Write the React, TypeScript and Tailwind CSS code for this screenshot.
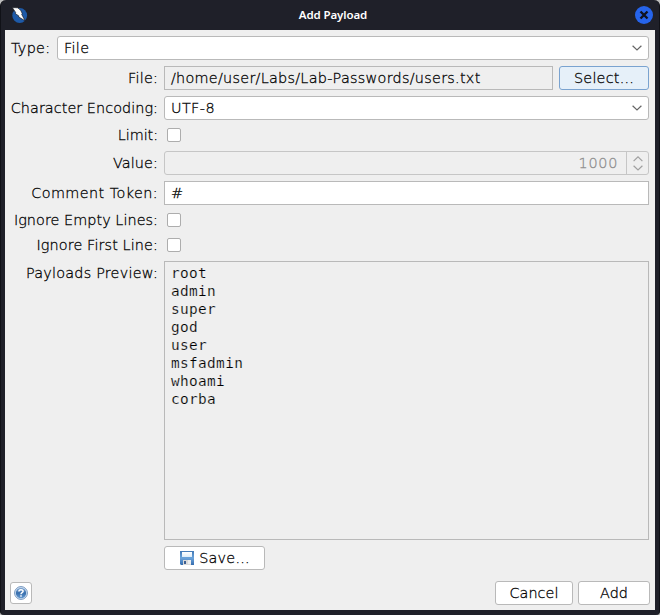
import React from "react";

const box = "border border-[#b9b9b9]";
const button = "flex items-center justify-center rounded-[3px] border border-[#b9b9b9] bg-white h-6 leading-[22px]";

function Chevron({ up = false, color = "#666" }: { up?: boolean; color?: string }) {
  return (
    <svg width="10" height="6" viewBox="0 0 10 6" fill="none" stroke={color} strokeWidth="1.2">
      <path d={up ? "M.6 5.1 5 .9 9.4 5.1" : "M.6.7 5 4.9 9.4.7"} />
    </svg>
  );
}

function Combo({ text, className = "" }: { text: string; className?: string }) {
  return (
    <div className={`flex h-6 items-center justify-between rounded-[3px] bg-white pl-[6px] pr-[6px] leading-[22px] ${box} ${className}`}>
      <span>{text}</span>
      <Chevron />
    </div>
  );
}

function Row({ label, tracking = "", className, children }: { label: string; tracking?: string; className: string; children: React.ReactNode }) {
  return (
    <div className={`flex ${className}`}>
      <div className="mr-[6px] flex h-6 w-[148px] shrink-0 justify-end whitespace-nowrap leading-[24px]">
        <span className={tracking}>{label}</span>
      </div>
      {children}
    </div>
  );
}

function Check() {
  return <div className="ml-[3px] mt-[5px] h-[14px] w-[14px] rounded-[2px] border border-[#adadad] bg-white" />;
}

function ZapLogo() {
  return (
    <svg width="17" height="17" viewBox="0 0 17 17">
      <circle cx="8.7" cy="8.5" r="7.4" fill="#1e5aa8" />
      <path d="M1.3 .5 6.6 .8C9.5 2.5 10.6 4.5 11.2 6.7L10.7 7.3 14.1 13.8 7.6 9.9 7.8 8.9 4.4 6.7 4.6 5.4Z" fill="#fff" stroke="#15191f" strokeWidth=".7" />
    </svg>
  );
}

function SaveIcon() {
  return (
    <svg width="14" height="14" viewBox="0 0 14 14">
      <defs>
        <linearGradient id="disk" x1="0" y1="0" x2="0" y2="1">
          <stop offset="0" stopColor="#4278b4" />
          <stop offset=".5" stopColor="#6aa3db" />
          <stop offset="1" stopColor="#356cae" />
        </linearGradient>
        <linearGradient id="label" x1="0" y1="0" x2="0" y2="1">
          <stop offset="0" stopColor="#fff" />
          <stop offset="1" stopColor="#dcecf9" />
        </linearGradient>
      </defs>
      <path d="M0 0H14V14H1L0 13Z" fill="url(#disk)" />
      <path d="M2 1H12V6H2Z" fill="url(#label)" />
      <path d="M3 9H11V14H3Z" fill="#d9d9d9" />
      <path d="M4 10H6V13H4Z" fill="#3d5f91" />
      <path d="M8 9H11V13H8Z" fill="#eee" />
    </svg>
  );
}

function HelpIcon() {
  return (
    <svg width="14" height="14" viewBox="0 0 14 14">
      <defs>
        <linearGradient id="help" x1="0" y1="0" x2="0" y2="1">
          <stop offset="0" stopColor="#85aad4" />
          <stop offset=".5" stopColor="#376ead" />
          <stop offset="1" stopColor="#6499d0" />
        </linearGradient>
      </defs>
      <circle cx="7" cy="7" r="6.4" fill="#dce9f6" stroke="#6288b5" strokeWidth=".9" />
      <circle cx="7" cy="7" r="5.2" fill="url(#help)" />
      <path d="M4.9 5.5C4.9 3.1 9.1 3.1 9.1 5.3 9.1 6.7 7 6.6 7 8.2M7 9.3V10.7" fill="none" stroke="#fff" strokeWidth="1.5" />
    </svg>
  );
}

export default function App() {
  return (
    <div className="h-[615px] w-[660px] overflow-hidden bg-[#bfbfbf]">
      <div className="flex h-[615px] w-[660px] flex-col rounded-t-[6px] rounded-b-[4px] border-x border-[#101117] bg-[#1f2029] px-1 pb-[5px] font-['DejaVu_Sans','DejaVu_Sans_Light',sans-serif] text-[14.4px] font-extralight text-black">
        <div className="flex h-[30px] shrink-0 items-center justify-between pl-[6px] pr-[2px]">
          <ZapLogo />
          <span className="pl-[3px] font-['Noto_Sans','Open_Sans',sans-serif] text-[11.5px] font-semibold tracking-[-0.1px] text-white">Add Payload</span>
          <svg width="18" height="18" viewBox="0 0 18 18">
            <circle cx="9" cy="9" r="9" fill="#2664eb" />
            <path d="M5.5 5.5 12.5 12.5M12.5 5.5 5.5 12.5" stroke="#10131f" strokeWidth="2.4" />
          </svg>
        </div>
        <div className="flex min-h-0 grow flex-col bg-[#efefef] pl-[5px] pr-[6px] pt-[6px] [-webkit-text-stroke:0.28px_currentColor]">
          <div className="flex">
            <div className="h-6 w-[47px] pl-[1px] leading-[24px] tracking-[0.3px]">Type:</div>
            <Combo text="File" className="grow tracking-[0.3px]" />
          </div>
          <Row label="File:" tracking="tracking-[0.2px]" className="mt-[6px] h-6">
            <div className={`w-[389px] pl-[6px] leading-[22px] tracking-[0.27px] ${box}`}>/home/user/Labs/Lab-Passwords/users.txt</div>
            <div className="ml-[6px] flex h-6 w-[90px] items-center justify-center rounded-[3px] border border-[#7aa3d0] bg-[#e6f0f9] leading-[22px] tracking-[0.2px]">Select...</div>
          </Row>
          <Row label="Character Encoding:" tracking="tracking-[0.05px]" className="mt-[6px] h-6">
            <Combo text="UTF-8" className="grow tracking-[0.4px]" />
          </Row>
          <Row label="Limit:" tracking="tracking-[-0.05px]" className="mt-[3px] h-6"><Check /></Row>
          <Row label="Value:" tracking="tracking-[0.12px]" className="mt-[4px] h-6">
            <div className="flex h-6 grow rounded-[3px] border border-[#c6c6c6] text-[#8c8c8c]">
              <div className="grow pr-[8px] text-right leading-[22px] tracking-[0.7px]">1000</div>
              <div className="flex w-[22px] flex-col items-center justify-center gap-[3px] border-l border-[#c6c6c6]">
                <Chevron up color="#a0a0a0" />
                <Chevron color="#a0a0a0" />
              </div>
            </div>
          </Row>
          <Row label="Comment Token:" tracking="tracking-[0.42px]" className="mt-[6px] h-6">
            <div className={`grow bg-white pl-[6px] leading-[22px] ${box}`}>#</div>
          </Row>
          <Row label="Ignore Empty Lines:" tracking="tracking-[0.05px]" className="mt-[3px] h-6"><Check /></Row>
          <Row label="Ignore First Line:" tracking="tracking-[0.11px]" className="mt-[1px] h-6"><Check /></Row>
          <Row label="Payloads Preview:" tracking="tracking-[0.22px]" className="mt-[4px] h-[279px]">
            <div className={`grow whitespace-pre pl-[6px] pt-[2px] font-['DejaVu_Sans_Mono',monospace] text-[14.4px] leading-[18px] tracking-[0.36px] [-webkit-text-stroke:0.18px_#efefef] ${box}`}>
              {["root", "admin", "super", "god", "user", "msfadmin", "whoami", "corba"].map((name) => <div key={name}>{name}</div>)}
            </div>
          </Row>
          <div className={`${button} ml-[154px] mt-[6px] w-[101px] gap-[5px] pl-px`}>
            <SaveIcon />
            <span className="tracking-[0.22px]">Save...</span>
          </div>
          <div className="mt-[11px] flex items-center">
            <div className="flex h-[22px] w-[22px] items-center justify-center rounded-[3px] border border-[#b9b9b9] bg-white"><HelpIcon /></div>
            <div className={`${button} ml-auto w-[78px] tracking-[0.05px]`}>Cancel</div>
            <div className={`${button} -mr-[1px] ml-[5px] w-[72px]`}>Add</div>
          </div>
        </div>
      </div>
    </div>
  );
}
